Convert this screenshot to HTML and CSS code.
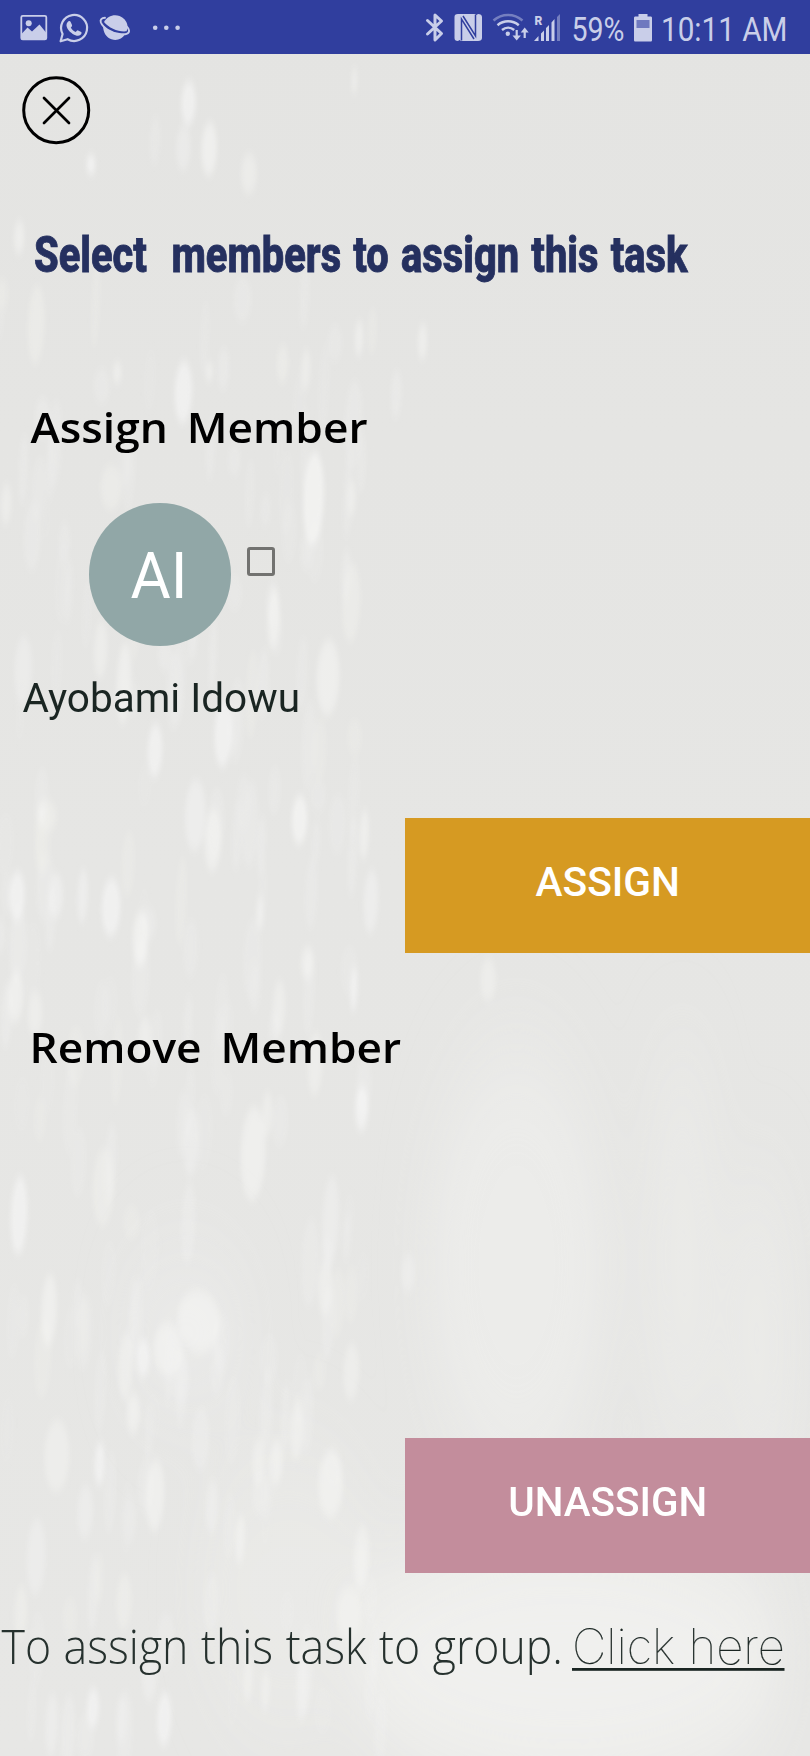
FILE: index.html
```html
<!DOCTYPE html>
<html lang="en">
<head>
<meta charset="utf-8">
<meta name="viewport" content="width=device-width, initial-scale=1">
<title>Assign task</title>
<link rel="stylesheet" href="styles.css">
</head>
<body>
<div class="screen">
  <svg class="backdrop" viewBox="0 0 1568 1568" preserveAspectRatio="none" aria-hidden="true">
    <defs>
      <filter id="soft" x="-50%" y="-50%" width="200%" height="200%"><feGaussianBlur stdDeviation="4.500"/></filter>
      <filter id="haze" x="-50%" y="-50%" width="200%" height="200%"><feGaussianBlur stdDeviation="45"/></filter>
    </defs>
    <g filter="url(#haze)" fill="#f2f2f0">
      <ellipse cx="360" cy="1190" rx="130" ry="70" opacity=".35"/>
      <ellipse cx="1000" cy="1130" rx="180" ry="200" opacity=".5"/>
      <ellipse cx="1320" cy="1120" rx="60" ry="190" opacity=".4"/>
      <ellipse cx="1470" cy="1200" rx="60" ry="160" opacity=".4"/>
      <ellipse cx="1100" cy="1480" rx="420" ry="120" opacity=".8"/>
      <ellipse cx="560" cy="1420" rx="180" ry="130" opacity=".3"/>
    </g>
    <g id="drops" filter="url(#soft)" fill="#f7f7f6"></g>
  </svg>

  <header class="status">
    <div class="status-group">
      <svg class="ico" width="34" height="54" viewBox="20 0 34 54">
        <rect x="21.300" y="15.800" width="25" height="23.600" rx="1.500" fill="none" stroke="#c9cee9" stroke-width="1.800"/>
        <circle cx="28.700" cy="23.200" r="3"/>
        <path d="M21.500 34l6-6.500 4.500 4 7.500-7 6.500 8v6.500h-24.500z"/>
      </svg>
      <svg class="ico" width="42" height="54" viewBox="54 0 42 54">
        <path d="M60.600 41.300l2-7.300a13 13 0 1 1 5 5.200z" fill="none" stroke="#c9cee9" stroke-width="2.200" stroke-linejoin="round"/>
        <path d="M67.500 22.300c1.200-1.700 2.600-1.600 3.300-.1l1.200 2.700c.3.800-.2 1.500-1.200 2.700 1.200 2.200 2.700 3.500 5 4.500 1-1.100 1.500-2 2.300-1.700l3 1.500c1 .6.300 2.100-.6 2.900-1.800 1.500-4.600 1-7.800-.9-3.600-2.300-8.300-7.600-5.200-11.600z"/>
      </svg>
      <svg class="ico" width="46" height="54" viewBox="96 0 46 54">
        <path d="M104 22c3-5.500 9.500-8.200 15.500-6 4 1.500 7 4.800 7.800 8.800.3 2.500 0 5-.8 6.500-8 .9-17.500-3-22.500-9.300z"/>
        <path d="M103 25.500c5 5 13 8.800 22 8.800-3 4.800-8 6.700-13.500 5-5-1.700-8.500-6.800-8.500-13.800z"/>
        <path d="M105 17.700c-3.500.2-5 2-4.200 4.600 2 5.500 10 10.300 18.500 11.700 6 .9 10.300-.3 9.700-3.600-.2-1.200-1-2.700-2.300-4" fill="none" stroke="#c9cee9" stroke-width="1.900" stroke-linecap="round"/>
      </svg>
      <svg class="ico" width="48" height="54" viewBox="142 0 48 54">
        <circle cx="155.200" cy="27.700" r="2.300"/><circle cx="166.300" cy="27.700" r="2.300"/><circle cx="177.600" cy="27.700" r="2.300"/>
      </svg>
    </div>
    <div class="status-group">
      <svg class="ico" width="30" height="54" viewBox="420 0 30 54">
        <path d="M427.500 20.500l14 13-6.500 6.500V15l6.500 6-14 13" fill="none" stroke="#c9cee9" stroke-width="3" stroke-linejoin="round" stroke-linecap="round"/>
      </svg>
      <svg class="ico" width="38" height="54" viewBox="450 0 38 54">
        <path d="M458 14h17l1.500 1 1.500-1c2.500 0 4 1 4 3v21c0 2-1.500 3-4 3h-17l-1.500-1-1.500 1c-2.500 0-3.500-1-3.500-3V17c0-2 1-3 3.500-3z"/>
        <path d="M461.500 40.500V19l12.500 20M475.500 14.500V36L463 16" fill="none" stroke="#303e9e" stroke-width="1.500"/>
      </svg>
      <svg class="ico" width="42" height="54" viewBox="488 0 42 54">
        <g fill="none" stroke="#c9cee9" stroke-width="2.500">
          <path d="M493.500 20.500c8.500-7.300 20.500-7.300 29 0" opacity=".45"/>
          <path d="M497.500 25.200c6.300-5.200 15-5.200 21.300 0M502 30c3.700-3 8.500-3 12.200 0"/>
          <path d="M516.700 30v8M524.700 38v-7.500" stroke-width="2.200"/>
        </g>
        <circle cx="507.800" cy="33.700" r="2.200"/>
        <path d="M512.500 35.500h8.400l-4.200 5zM520.700 32.500h8l-4-5z"/>
      </svg>
      <svg class="ico" width="42" height="54" viewBox="530 0 42 54">
        <text class="roaming" x="534.500" y="25">R</text>
        <path d="M534 41l4.500-5v5zM541 33.500l3-3V41h-3zM546 28l3-3v16h-3zM551.500 22.500l3-3.500v22h-3z"/>
        <path d="M557 17l3-3v27h-3z" opacity=".45"/>
      </svg>
      <svg class="ico" width="58" height="54" viewBox="572 0 58 54">
        <text class="status-text" x="571.500" y="41" textLength="53" lengthAdjust="spacingAndGlyphs">59%</text>
      </svg>
      <svg class="ico" width="32" height="54" viewBox="630 0 32 54">
        <path d="M638.500 14h9v2.500h3c1 0 1.500.5 1.500 1.500v22c0 1-.5 1.500-1.500 1.500h-15c-1 0-1.500-.5-1.500-1.500V18c0-1 .5-1.500 1.500-1.500h3z"/>
        <rect x="636.500" y="20" width="13" height="8" fill="#6f79bf"/>
      </svg>
      <svg class="ico" width="148" height="54" viewBox="662 0 148 54">
        <text class="status-text" x="661" y="41" textLength="126.500" lengthAdjust="spacingAndGlyphs">10:11 AM</text>
      </svg>
    </div>
  </header>

  <main class="content">
    <button class="close" aria-label="Close">
      <svg width="70" height="70" viewBox="21 75 70 70" fill="none" stroke="#000">
        <circle cx="56.200" cy="110.200" r="32.500" stroke-width="3"/>
        <path d="M44 98l25 25M69 98l-25 25" stroke-width="2.700" stroke-linecap="round"/>
      </svg>
    </button>

    <h1 class="title">
      <svg width="810" height="80" viewBox="0 210 810 80">
        <text x="34" y="271.500" textLength="653.500" lengthAdjust="spacingAndGlyphs">Select  members to assign this task</text>
      </svg>
    </h1>

    <section class="assign">
      <h2 class="subtitle">
        <svg width="810" height="80" viewBox="0 390 810 80">
          <text x="30.500" y="442.600" textLength="337" lengthAdjust="spacingAndGlyphs">Assign Member</text>
        </svg>
      </h2>
      <div class="member">
        <div class="avatar">
          <svg width="143" height="143" viewBox="88.500 503 143 143">
            <text x="130" y="598" textLength="57" lengthAdjust="spacingAndGlyphs">AI</text>
          </svg>
        </div>
        <span class="checkbox" role="checkbox" aria-checked="false"></span>
      </div>
      <div class="name">
        <svg width="320" height="60" viewBox="0 675 320 60">
          <text x="22.500" y="711.700" textLength="277.500" lengthAdjust="spacingAndGlyphs">Ayobami Idowu</text>
        </svg>
      </div>
      <button class="action action-assign">
        <svg width="405" height="135" viewBox="405 818 405 135">
          <text x="535.500" y="895.500" textLength="144.500" lengthAdjust="spacingAndGlyphs">ASSIGN</text>
        </svg>
      </button>
    </section>

    <section class="remove">
      <h2 class="subtitle">
        <svg width="810" height="80" viewBox="0 1010 810 80">
          <text x="29.500" y="1062.700" textLength="371.500" lengthAdjust="spacingAndGlyphs">Remove Member</text>
        </svg>
      </h2>
      <button class="action action-unassign">
        <svg width="405" height="135" viewBox="405 1438 405 135">
          <text x="508.300" y="1515.700" textLength="199" lengthAdjust="spacingAndGlyphs">UNASSIGN</text>
        </svg>
      </button>
    </section>

    <p class="group">
      <svg width="810" height="156" viewBox="0 1600 810 156">
        <text class="hint" x="1.500" y="1664" textLength="561.500" lengthAdjust="spacingAndGlyphs">To assign this task to group.</text>
        <a href="#group">
          <text class="link" x="572" y="1664" textLength="213" lengthAdjust="spacingAndGlyphs">Click here</text>
          <rect class="rule" x="572" y="1668" width="212.500" height="2.800"/>
        </a>
      </svg>
    </p>
  </main>
</div>
<script src="script.js"></script>
</body>
</html>
```

FILE: styles.css
```css
* { box-sizing: border-box; }

body {
  margin: 0;
  background: #e5e5e3;
  font-family: Roboto, "Liberation Sans", sans-serif;
}

.screen {
  position: relative;
  width: 810px;
  height: 1756px;
  overflow: hidden;
  background: linear-gradient(#e4e4e2, #e6e6e4 50%, #e7e7e5);
}

.backdrop {
  position: absolute;
  inset: 0;
  width: 100%;
  height: 100%;
}

.screen svg {
  display: block;
  overflow: visible;
}

.status {
  position: relative;
  display: flex;
  justify-content: space-between;
  height: 54px;
  padding-left: 20px;
  background: #303e9e;
}

.status-group { display: flex; }
.ico { fill: #c9cee9; }
.status-text { font: 400 34px Roboto, sans-serif; }
.roaming { font: 900 12px Roboto, sans-serif; }

.content {
  position: relative;
  display: flex;
  flex-direction: column;
}

button {
  padding: 0;
  border: 0;
  background: none;
}

.close {
  width: 70px;
  height: 70px;
  margin: 21px 0 0 21px;
}

.title { margin: 65px 0 0; }

.title text {
  font: 800 50.500px Roboto, sans-serif;
  fill: #25305f;
  stroke: #25305f;
  stroke-width: .9px;
  word-spacing: 3px;
  white-space: pre;
}

.assign {
  display: flex;
  flex-direction: column;
  margin-top: 100px;
}

.subtitle { margin: 0; }

.subtitle text {
  font: 600 41.500px "Open Sans", sans-serif;
  fill: #000;
  word-spacing: 7px;
}

.member {
  display: flex;
  align-items: flex-start;
  gap: 15.500px;
  padding: 33px 0 0 88.500px;
}

.avatar {
  width: 142.500px;
  height: 142.500px;
  border-radius: 50%;
  background: #91a7a7;
}

.avatar text {
  font: 400 64px Roboto, sans-serif;
  fill: #fff;
}

.checkbox {
  width: 28.500px;
  height: 29px;
  margin-top: 44px;
  border: 3px solid #727270;
  border-radius: 3px;
}

.name { margin-top: 29.500px; }

.name text {
  font: 400 40px Roboto, sans-serif;
  fill: #1a2522;
}

.action {
  align-self: flex-end;
  width: 405px;
  height: 135px;
}

.action text {
  font: 500 40.300px Roboto, sans-serif;
  fill: #fff;
}

.action-assign {
  margin-top: 83px;
  background: #d69a22;
}

.action-unassign { background: #c38d9c; }

.remove {
  display: flex;
  flex-direction: column;
  gap: 348px;
  margin-top: 57px;
}

.group { margin: 27px 0 0; }

.hint {
  font: 300 47px "Open Sans", sans-serif;
  fill: #26312e;
  word-spacing: 1px;
}

.link {
  font: 100 48.500px Inter, sans-serif;
  fill: #1a2522;
  stroke: #1a2522;
  stroke-width: .2px;
}

.rule { fill: #1a2522; }
```

FILE: script.js
```js
// Soft light drops over the backdrop: x, y, rx, ry, opacity
const drops = [
  [365,92,14,20,.6],[355,132,14,20,.35],[405,133,15,24,.55],[482,155,15,18,.4],[176,147,9,9,.7],
  [300,125,10,22,.2],[686,72,5,12,.5],[37,212,10,15,.5],[70,290,16,35,.3],[355,350,17,28,.6],
  [405,332,7,9,.5],[227,333,8,10,.5],[547,325,11,17,.3],[592,330,9,18,.4],[695,302,8,16,.5],
  [818,305,9,16,.5],[767,352,10,22,.25],[607,445,20,42,.65],[680,445,9,16,.4],[215,435,20,20,.3],
  [12,450,10,18,.4],[530,553,12,27,.5],[680,538,17,35,.3],[635,605,22,34,.5],[195,580,13,25,.4],
  [45,598,17,30,.35],[240,610,14,36,.5],[300,670,14,24,.6],[432,655,17,30,.6],[90,728,20,14,.3],
  [378,728,20,32,.45],[412,750,16,28,.5],[580,732,15,22,.65],[705,745,9,22,.5],[33,800,15,22,.6],
  [108,800,14,20,.45],[160,800,10,24,.45],[215,810,18,26,.6],[272,838,15,25,.55],[718,805,14,28,.45],
  [503,815,7,15,.5],[595,860,12,15,.5],[685,883,7,20,.6],[30,890,15,23,.5],[68,905,14,20,.4],
  [945,875,15,19,.4],[280,930,13,22,.4],[540,900,12,25,.4],[610,950,14,28,.4],[700,990,13,20,.6],
  [517,995,10,20,.4],[490,1030,24,42,.5],[370,1020,15,30,.35],[640,1090,16,40,.35],[37,1085,16,35,.6],
  [200,1060,20,35,.3],[790,1137,13,17,.35],[95,1170,15,32,.5],[385,1180,42,28,.5],[325,1205,28,24,.5],
  [277,1213,13,17,.6],[243,1220,14,30,.4],[258,1262,13,18,.5],[630,1150,14,25,.4],[680,1225,15,25,.4],
  [110,1300,24,32,.4],[193,1307,10,20,.6],[300,1335,18,32,.5],[640,1325,24,30,.5],[500,1305,12,20,.4],
  [535,1305,12,20,.4],[575,1275,12,26,.4],[70,1390,18,34,.35],[465,1375,9,22,.5],[165,1350,15,24,.35],
  [700,1390,15,28,.4],[410,1345,12,24,.35],[40,1440,12,24,.3],[240,1430,14,25,.3],[290,1495,15,24,.35],
  [675,1440,24,24,.4],[180,1525,12,18,.6],[318,1535,14,24,.6],[480,1500,9,20,.4],[514,1510,8,18,.4],
  [585,1505,12,32,.35],[100,1540,12,28,.35],[235,1535,10,22,.35]
];

// Low-contrast texture between the drops, from a fixed sequence
let seed = 11;
const next = () => (seed = (seed * 16807) % 2147483647) / 2147483647;
for (let i = 0; i < 190; i++) {
  drops.push([next() * 740, 250 + next() * 1310, 7 + next() * 10, 14 + next() * 26, .08 + next() * .17]);
}

const layer = document.getElementById('drops');
for (const [x, y, rx, ry, opacity] of drops) {
  const e = document.createElementNS('http://www.w3.org/2000/svg', 'ellipse');
  const attrs = { cx: x, cy: y, rx, ry, opacity, transform: `rotate(5 ${x} ${y})` };
  for (const k in attrs) e.setAttribute(k, attrs[k]);
  layer.appendChild(e);
}
```
